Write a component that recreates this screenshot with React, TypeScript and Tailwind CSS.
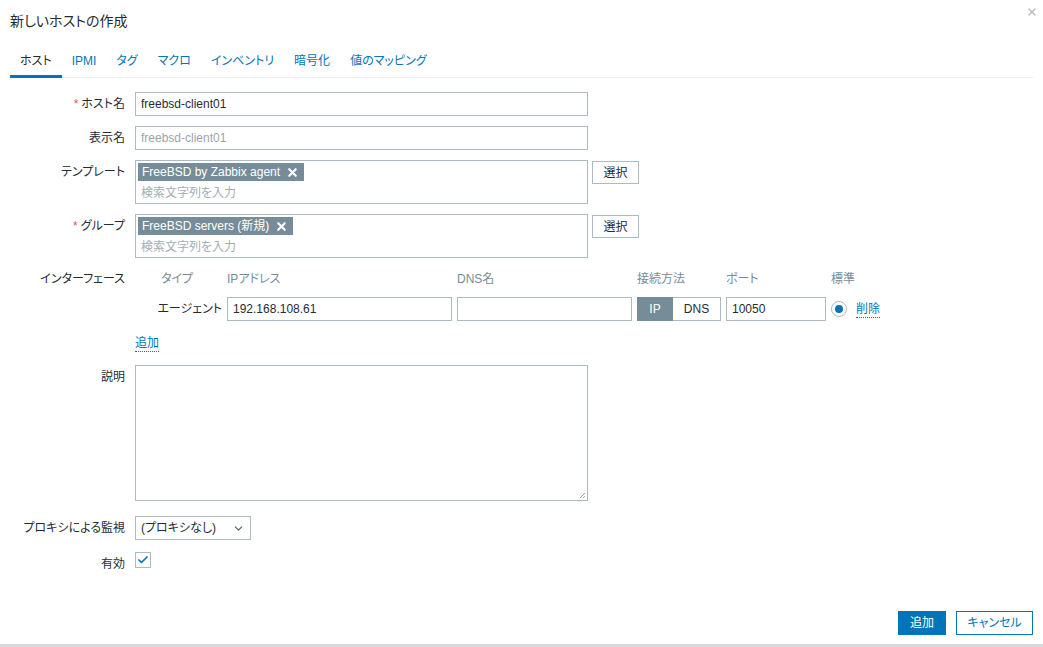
import { Check, ChevronDown, X } from 'lucide-react';

const FONT = "font-['Liberation_Sans','Noto_Sans_CJK_JP',sans-serif] [font-feature-settings:'palt']";

const tabs = ['ホスト', 'IPMI', 'タグ', 'マクロ', 'インベントリ', '暗号化', '値のマッピング'];

function Label({ text, required }: { text: string; required?: boolean }) {
  return (
    <div className="w-[115px] shrink-0 text-right leading-[24px] text-[#1f2c33]">
      {required && <span className="text-[#e45959] mr-[3px]">*</span>}
      {text}
    </div>
  );
}

function Row({ children, className = '' }: { children: React.ReactNode; className?: string }) {
  return <div className={`flex items-start gap-[10px] ${className}`}>{children}</div>;
}

function TextInput({ value, muted, className = '' }: { value: string; muted?: boolean; className?: string }) {
  return (
    <div
      className={`h-[24px] border border-[#acbbc2] bg-white px-[5px] leading-[22px] ${
        muted ? 'text-[#9aa5ab]' : 'text-[#1f2c33]'
      } ${className}`}
    >
      {value}
    </div>
  );
}

function MultiSelect({ tag }: { tag: string }) {
  return (
    <>
      <div className="w-[453px] h-[44px] border border-[#acbbc2] bg-white px-[2px] pt-[2px]">
        <span className="inline-flex items-center h-[18px] bg-[#768d99] text-white pl-[4px] pr-[5px] gap-[6px] leading-[18px]">
          {tag}
          <X size={13} strokeWidth={4} />
        </span>
        <div className="pl-[3px] leading-[20px] mt-[2px] text-[#a3aeb4]">検索文字列を入力</div>
      </div>
      <button className="ml-[-6px] h-[23px] w-[47px] border border-[#acbbc2] bg-white text-[#1f2c33] mt-[1px]">
        選択
      </button>
    </>
  );
}

function DottedLink({ text }: { text: string }) {
  return (
    <span className="text-[#0275b8] border-b border-dotted border-[#0275b8] leading-[15px] inline-block">
      {text}
    </span>
  );
}

export default function App() {
  return (
    <div className={`${FONT} w-[1043px] h-[647px] bg-[#d3d9dc] text-[12px] text-[#1f2c33]`}>
      <div className="h-[644px] bg-white px-[10px] relative flex flex-col">
        <button className="absolute right-[5px] top-[6px] text-[#b4c0c6]">
          <X size={12} strokeWidth={3} />
        </button>
        <div className="pt-[11px] text-[14px] leading-[20px] text-[#1f2c33]">新しいホストの作成</div>

        <div className="mt-[15px] flex border-b border-[#ebeef0]">
          {tabs.map((t, i) => (
            <div
              key={t}
              className={`px-[10px] h-[32px] leading-[30px] border-b-[3px] mb-[-1px] ${
                i === 0 ? 'border-[#0275b8] text-[#1f2c33]' : 'border-transparent text-[#0275b8]'
              }`}
            >
              {t}
            </div>
          ))}
        </div>

        <div className="mt-[14px] flex flex-col">
          <Row>
            <Label text="ホスト名" required />
            <TextInput value="freebsd-client01" className="w-[453px]" />
          </Row>
          <Row className="mt-[10px]">
            <Label text="表示名" />
            <TextInput value="freebsd-client01" muted className="w-[453px]" />
          </Row>
          <Row className="mt-[10px]">
            <Label text="テンプレート" />
            <MultiSelect tag="FreeBSD by Zabbix agent" />
          </Row>
          <Row className="mt-[10px]">
            <Label text="グループ" required />
            <MultiSelect tag="FreeBSD servers (新規)" />
          </Row>

          <Row className="mt-[12px]">
            <div className="w-[115px] shrink-0 text-right leading-[18px]">インターフェース</div>
            <div className="flex flex-col">
              <div className="grid grid-cols-[87px_225px_175px_84px_100px_auto] gap-x-[5px] leading-[18px] text-[#768d99]">
                <div className="pl-[26px]">タイプ</div>
                <div>IPアドレス</div>
                <div>DNS名</div>
                <div>接続方法</div>
                <div>ポート</div>
                <div>標準</div>
              </div>
              <div className="mt-[9px] grid grid-cols-[87px_225px_175px_84px_100px_auto] gap-x-[5px] items-center">
                <div className="text-right">エージェント</div>
                <TextInput value="192.168.108.61" />
                <TextInput value="" />
                <div className="flex h-[24px]">
                  <div className="w-[36px] bg-[#768d99] text-white text-center leading-[24px]">IP</div>
                  <div className="flex-1 border border-[#acbbc2] border-l-0 text-center leading-[22px]">DNS</div>
                </div>
                <TextInput value="10050" />
                <div className="flex items-center">
                  <span className="w-[16px] h-[16px] rounded-full border border-[#acbbc2] flex items-center justify-center">
                    <span className="w-[8px] h-[8px] rounded-full bg-[#0275b8]" />
                  </span>
                  <span className="ml-[9px]">
                    <DottedLink text="削除" />
                  </span>
                </div>
              </div>
            </div>
          </Row>

          <Row className="mt-[15px]">
            <div className="w-[115px]" />
            <DottedLink text="追加" />
          </Row>

          <Row className="mt-[13px]">
            <Label text="説明" />
            <div className="relative w-[453px] h-[136px] border border-[#acbbc2] bg-white">
              <svg className="absolute right-[1px] bottom-[1px]" width="7" height="7" viewBox="0 0 7 7">
                <path d="M6 1 L1 6 M6 4 L4 6" stroke="#a0a8ad" strokeWidth="1" />
              </svg>
            </div>
          </Row>

          <Row className="mt-[15px]">
            <Label text="プロキシによる監視" />
            <div className="w-[116px] h-[24px] border border-[#acbbc2] bg-white flex items-center justify-between pl-[5px] pr-[5px]">
              <span>(プロキシなし)</span>
              <ChevronDown size={13} strokeWidth={2} className="text-[#4f5b61]" />
            </div>
          </Row>

          <Row className="mt-[12px] items-center">
            <Label text="有効" />
            <div className="w-[16px] h-[16px] border border-[#acbbc2] bg-white flex items-center justify-center">
              <Check size={12} strokeWidth={3.5} className="text-[#0275b8]" />
            </div>
          </Row>
        </div>

        <div className="mt-auto mb-[9px] flex justify-end gap-[10px]">
          <button className="h-[24px] w-[48px] bg-[#0275b8] text-white">追加</button>
          <button className="h-[24px] w-[77px] border border-[#0275b8] text-[#0275b8] bg-white">キャンセル</button>
        </div>
      </div>
    </div>
  );
}
